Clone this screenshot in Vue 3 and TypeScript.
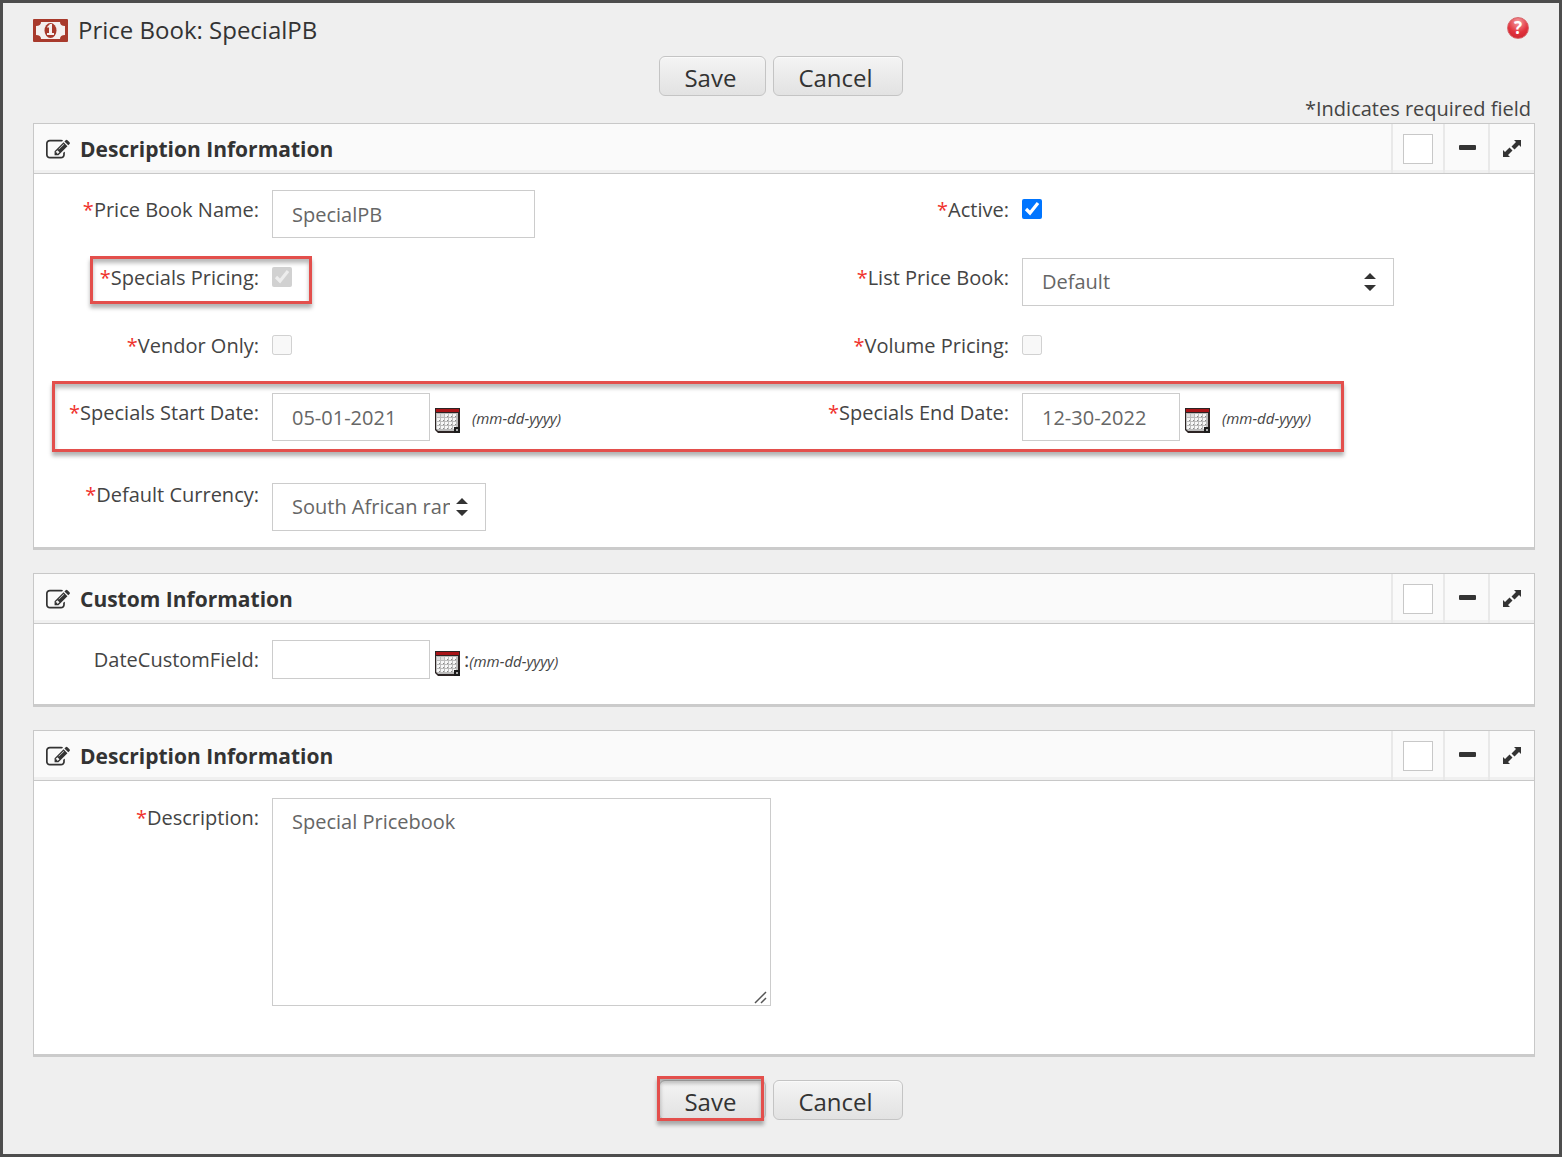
<script setup lang="ts">
import { ref, h, type FunctionalComponent } from 'vue'

const name = ref('SpecialPB')
const active = ref(true)
const specials = ref(true)
const vendorOnly = ref(false)
const volume = ref(false)
const listBook = ref('Default')
const currency = ref('South African rand')
const startDate = ref('05-01-2021')
const endDate = ref('12-30-2022')
const customDate = ref('')
const description = ref('Special Pricebook')

const dots = [0, 1, 2, 3].flatMap((r) => [0, 1, 2, 3, 4].map((c) => ({ x: 3 + c * 4, y: 7 + r * 4, hidden: r === 0 && c < 2 })))

const CalendarIcon: FunctionalComponent = () =>
  h('svg', { width: 25, height: 25, viewBox: '0 0 25 25', 'aria-hidden': 'true' }, [
    h('path', { d: 'M0 0H25V25H3L0 22Z', fill: '#2c2424' }),
    h('path', { d: 'M1 1H24V4H1Z', fill: '#a81418' }),
    h('path', { d: 'M1 5H23V20H19V23H3L1 21Z', fill: '#bcbcbc' }),
    ...dots.map((d) => h('rect', { x: d.x - 1, y: d.y - 1, width: 3, height: 3, fill: d.hidden ? '#e0e0e0' : '#f6f6f6' })),
    ...dots.filter((d) => !d.hidden).map((d) => h('rect', { x: d.x + 1, y: d.y + 1, width: 1, height: 1, fill: '#888' })),
    h('path', { d: 'M19 19H25V25H19Z', fill: '#1c1c1c' }),
    h('rect', { x: 21, y: 21, width: 2, height: 2, fill: '#aaa' }),
  ])

const EditIcon: FunctionalComponent = () =>
  h('svg', { class: 'edit', width: 24, height: 24, viewBox: '0 0 1792 1792', fill: '#333', 'aria-hidden': 'true' }, [
    h('path', {
      d: 'M888 1184l116-116-152-152-116 116v56h96v96h56zm440-720q-16-16-33 1l-350 350q-17 17-1 33t33-1l350-350q17-17 1-33zm80 594v190q0 119-84.5 203.5t-203.5 84.5h-832q-119 0-203.5-84.5t-84.5-203.5v-832q0-119 84.5-203.5t203.5-84.5h832q63 0 117 25 15 7 18 23 3 17-9 29l-49 49q-14 14-32 8-23-6-45-6h-832q-66 0-113 47t-47 113v832q0 66 47 113t113 47h832q66 0 113-47t47-113v-126q0-13 9-22l64-64q15-15 35-7t20 29zm-96-738l288 288-672 672h-288v-288zm444 132l-92 92-288-288 92-92q28-28 68-28t68 28l152 152q28 28 28 68t-28 68z',
    }),
  ])

const ArrowsIcon: FunctionalComponent = () =>
  h('svg', { class: 'arrows', width: 12, height: 18, viewBox: '0 0 12 18', fill: '#333', 'aria-hidden': 'true' }, [
    h('path', { d: 'M6 0L12 6H0ZM0 12H12L6 18Z' }),
  ])

const PanelTools: FunctionalComponent = () =>
  h('div', { class: 'tools' }, [
    h('span', { class: 'tool wide' }, [h('input', { type: 'checkbox', class: 'square', 'aria-label': 'Select section' })]),
    h('button', { type: 'button', class: 'tool', 'aria-label': 'Collapse' }, [
      h('svg', { width: 18, height: 20, viewBox: '0 0 18 20' }, [h('rect', { x: 1, y: 6, width: 17, height: 5, rx: 1, fill: '#333' })]),
    ]),
    h('button', { type: 'button', class: 'tool', 'aria-label': 'Expand' }, [
      h('svg', { width: 20, height: 20, viewBox: '0 0 20 20', fill: '#333' }, [
        h('path', { d: 'M12 1H19V8L17 6L12.500 10.500L9.500 7.500L14 3ZM8 18H1V11L3 13L7.500 8.500L10.500 11.500L6 16Z' }),
      ]),
    ]),
  ])
</script>

<template>
  <main class="page">
    <header class="top">
      <h1>
        <svg width="35" height="23" viewBox="0 0 35 23" aria-hidden="true">
          <rect width="35" height="23" rx="1" fill="#a83a2c" />
          <path d="M8 3H27Q27 7 32 7V16Q27 16 27 20H8Q8 16 3 16V7Q8 7 8 3Z" fill="#f4f0ef" />
          <ellipse cx="17.500" cy="11.500" rx="6" ry="7.500" fill="#a83a2c" />
          <path d="M14 8L17 5H19V14H21V16H14V14H16V8L15 9Z" fill="#f4f0ef" />
        </svg>
        Price Book: SpecialPB
      </h1>
      <button type="button" class="help" aria-label="Help">?</button>
    </header>

    <div class="actions">
      <button type="button" class="btn">Save</button>
      <button type="button" class="btn cancel">Cancel</button>
    </div>
    <p class="required">*Indicates required field</p>

    <section class="panel">
      <div class="head"><EditIcon /><h2>Description Information</h2><PanelTools /></div>
      <div class="body">
        <div class="row">
          <div class="cell">
            <label for="name"><i>*</i>Price Book Name:</label>
            <input id="name" v-model="name" type="text" class="box name" />
          </div>
          <div class="cell">
            <label for="active"><i>*</i>Active:</label>
            <input id="active" v-model="active" type="checkbox" class="check" />
          </div>
        </div>
        <div class="row">
          <div class="cell">
            <label for="specials"><i>*</i>Specials Pricing:</label>
            <input id="specials" v-model="specials" type="checkbox" class="check" disabled />
            <span class="mark mark-pricing"></span>
          </div>
          <div class="cell">
            <label for="list"><i>*</i>List Price Book:</label>
            <span class="pick">
              <select id="list" v-model="listBook" class="box list"><option>Default</option></select>
              <ArrowsIcon />
            </span>
          </div>
        </div>
        <div class="row">
          <div class="cell">
            <label for="vendor"><i>*</i>Vendor Only:</label>
            <input id="vendor" v-model="vendorOnly" type="checkbox" class="check" disabled />
          </div>
          <div class="cell">
            <label for="volume"><i>*</i>Volume Pricing:</label>
            <input id="volume" v-model="volume" type="checkbox" class="check" disabled />
          </div>
        </div>
        <div class="row dates">
          <div class="cell">
            <label for="start"><i>*</i>Specials Start Date:</label>
            <span class="date">
              <input id="start" v-model="startDate" type="text" class="box day" />
              <button type="button" class="cal" aria-label="Pick start date"><CalendarIcon /></button>
              <em>(mm-dd-yyyy)</em>
            </span>
          </div>
          <div class="cell">
            <label for="end"><i>*</i>Specials End Date:</label>
            <span class="date">
              <input id="end" v-model="endDate" type="text" class="box day" />
              <button type="button" class="cal" aria-label="Pick end date"><CalendarIcon /></button>
              <em>(mm-dd-yyyy)</em>
            </span>
          </div>
          <span class="mark mark-dates"></span>
        </div>
        <div class="row">
          <div class="cell">
            <label for="currency"><i>*</i>Default Currency:</label>
            <span class="pick lowered">
              <select id="currency" v-model="currency" class="box currency"><option>South African rand</option></select>
              <ArrowsIcon />
            </span>
          </div>
        </div>
      </div>
    </section>

    <section class="panel">
      <div class="head"><EditIcon /><h2>Custom Information</h2><PanelTools /></div>
      <div class="body custom">
        <div class="row">
          <div class="cell">
            <label for="custom">DateCustomField:</label>
            <span class="date tight">
              <input id="custom" v-model="customDate" type="text" class="box day short" />
              <button type="button" class="cal" aria-label="Pick date"><CalendarIcon /></button>
              <span class="colon">:</span><em>(mm-dd-yyyy)</em>
            </span>
          </div>
        </div>
      </div>
    </section>

    <section class="panel">
      <div class="head"><EditIcon /><h2>Description Information</h2><PanelTools /></div>
      <div class="body notes">
        <div class="row">
          <div class="cell">
            <label for="description"><i>*</i>Description:</label>
            <span class="pick">
              <textarea id="description" v-model="description" class="box"></textarea>
              <svg class="grip" width="16" height="16" viewBox="0 0 16 16" aria-hidden="true">
                <rect width="16" height="16" fill="#fff" />
                <path d="M2 14L13 3M8 14L13 9" stroke="#555" stroke-width="1.500" fill="none" />
              </svg>
            </span>
          </div>
        </div>
      </div>
    </section>

    <div class="actions bottom">
      <span class="marked">
        <button type="button" class="btn">Save</button>
        <span class="mark mark-save"></span>
      </span>
      <button type="button" class="btn cancel">Cancel</button>
    </div>
  </main>
</template>

<style>
body {
  margin: 0;
  background: #efefef;
}
.edit {
  margin-top: 3px;
}
.arrows {
  position: absolute;
  right: 18px;
  top: 15px;
  pointer-events: none;
}
.tools {
  display: flex;
  align-self: stretch;
  margin-left: auto;
}
.tool {
  display: flex;
  align-items: center;
  justify-content: center;
  box-sizing: border-box;
  width: 45px;
  padding: 0;
  border: 0;
  border-left: 2px solid #e9e9e9;
  background: none;
}
.tool.wide {
  width: 52px;
}
.square {
  appearance: none;
  width: 30px;
  height: 30px;
  margin: 0;
  border: 1px solid #c8c8c8;
  background: #fff;
}
</style>

<style scoped>
.page {
  box-sizing: border-box;
  min-height: 100vh;
  padding: 13px 24px 32px 30px;
  border: 3px solid #4d4d4d;
  background: #efefef;
  color: #444;
  font: 20px/28px "Open Sans", "Noto Sans", sans-serif;
}
.top {
  display: flex;
  justify-content: space-between;
  height: 40px;
}
h1 {
  display: flex;
  gap: 10px;
  align-items: center;
  height: 28px;
  margin: 0;
  color: #333;
  font-size: 24px;
  font-weight: 400;
}
.help {
  width: 22px;
  height: 22px;
  margin: 1px 6px 0 0;
  padding: 0;
  border: 1px solid #d8686c;
  border-radius: 50%;
  background: radial-gradient(circle at 50% 20%, #f3a0a4, #e2333d 55%, #c9202b);
  color: #fff;
  font: 700 17px/20px "Open Sans", sans-serif;
}
.actions {
  display: flex;
  gap: 7px;
  justify-content: center;
  padding-right: 6px;
}
.actions.bottom {
  margin-top: 23px;
}
.btn {
  box-sizing: border-box;
  height: 40px;
  padding: 4px 29px 0 24px;
  border: 1px solid #c4c4c4;
  border-radius: 6px;
  background: linear-gradient(#f4f4f4, #e2e2e2);
  box-shadow: inset 0 1px 0 #fafafa;
  color: #333;
  font: 24px/34px "Open Sans", sans-serif;
}
.required {
  margin: -1px 4px 0 0;
  text-align: right;
}
.panel {
  margin-bottom: 23px;
  border: 1px solid #c8c8c8;
  border-bottom: 3px solid #cbcbcb;
  background: #fff;
}
.head {
  display: flex;
  align-items: center;
  height: 49px;
  padding: 0 1px 0 12px;
  border-bottom: 1px solid #c8c8c8;
  background: #fafafa;
  box-shadow: inset 0 -3px 0 #f0f0f0;
}
h2 {
  margin: 0 0 0 10px;
  color: #333;
  font-size: 21px;
  font-weight: 700;
}
.body {
  padding: 16px 0;
}
.body.custom {
  padding-bottom: 17px;
}
.body.notes {
  padding: 17px 0 48px;
}
.row {
  position: relative;
  display: grid;
  grid-template-columns: 1fr 1fr;
  min-height: 47px;
}
.row + .row {
  margin-top: 20px;
}
.dates {
  padding-bottom: 14px;
}
.cell {
  position: relative;
  display: flex;
  align-items: flex-start;
}
label {
  box-sizing: border-box;
  flex: none;
  width: 30%;
  margin-right: 13px;
  padding-top: 6px;
  text-align: right;
}
label i {
  color: #f0322d;
  font-style: normal;
}
.box {
  box-sizing: border-box;
  height: 48px;
  margin: 0;
  padding: 0 19px;
  border: 1px solid #ccc;
  border-radius: 0;
  background: #fff;
  color: #666;
  font: 20px/28px "Open Sans", sans-serif;
}
select.box {
  appearance: none;
}
.name {
  width: 263px;
}
.list {
  width: 372px;
}
.currency {
  width: 214px;
  padding-right: 35px;
}
.day {
  width: 158px;
}
.short {
  height: 39px;
}
textarea.box {
  width: 499px;
  height: 208px;
  padding: 9px 19px;
}
.grip {
  position: absolute;
  right: 2px;
  bottom: 1px;
  pointer-events: none;
}
.check {
  width: 20px;
  height: 20px;
  margin: 9px 0 0;
}
.pick {
  position: relative;
  display: flex;
}
.lowered {
  margin-top: 8px;
}
.date {
  display: flex;
  align-items: center;
}
.cal {
  display: flex;
  margin: 7px 0 0 5px;
  padding: 0;
  border: 0;
  background: none;
}
em {
  margin: 2px 0 0 12px;
  font-size: 15px;
}
.colon {
  margin-left: 4px;
}
.tight em {
  margin-left: 0;
}
.marked {
  position: relative;
  display: flex;
}
.mark {
  position: absolute;
  box-sizing: border-box;
  border: 3px solid #e34f4c;
  box-shadow: 0 4px 4px rgba(0, 0, 0, 0.3), inset 0 4px 4px rgba(0, 0, 0, 0.28);
  pointer-events: none;
}
.mark-pricing {
  top: -2px;
  left: 56px;
  width: 222px;
  height: 48px;
}
.mark-dates {
  top: -12px;
  right: 190px;
  left: 18px;
  height: 71px;
}
.mark-save {
  top: -4px;
  left: -2px;
  width: 107px;
  height: 45px;
}
</style>
